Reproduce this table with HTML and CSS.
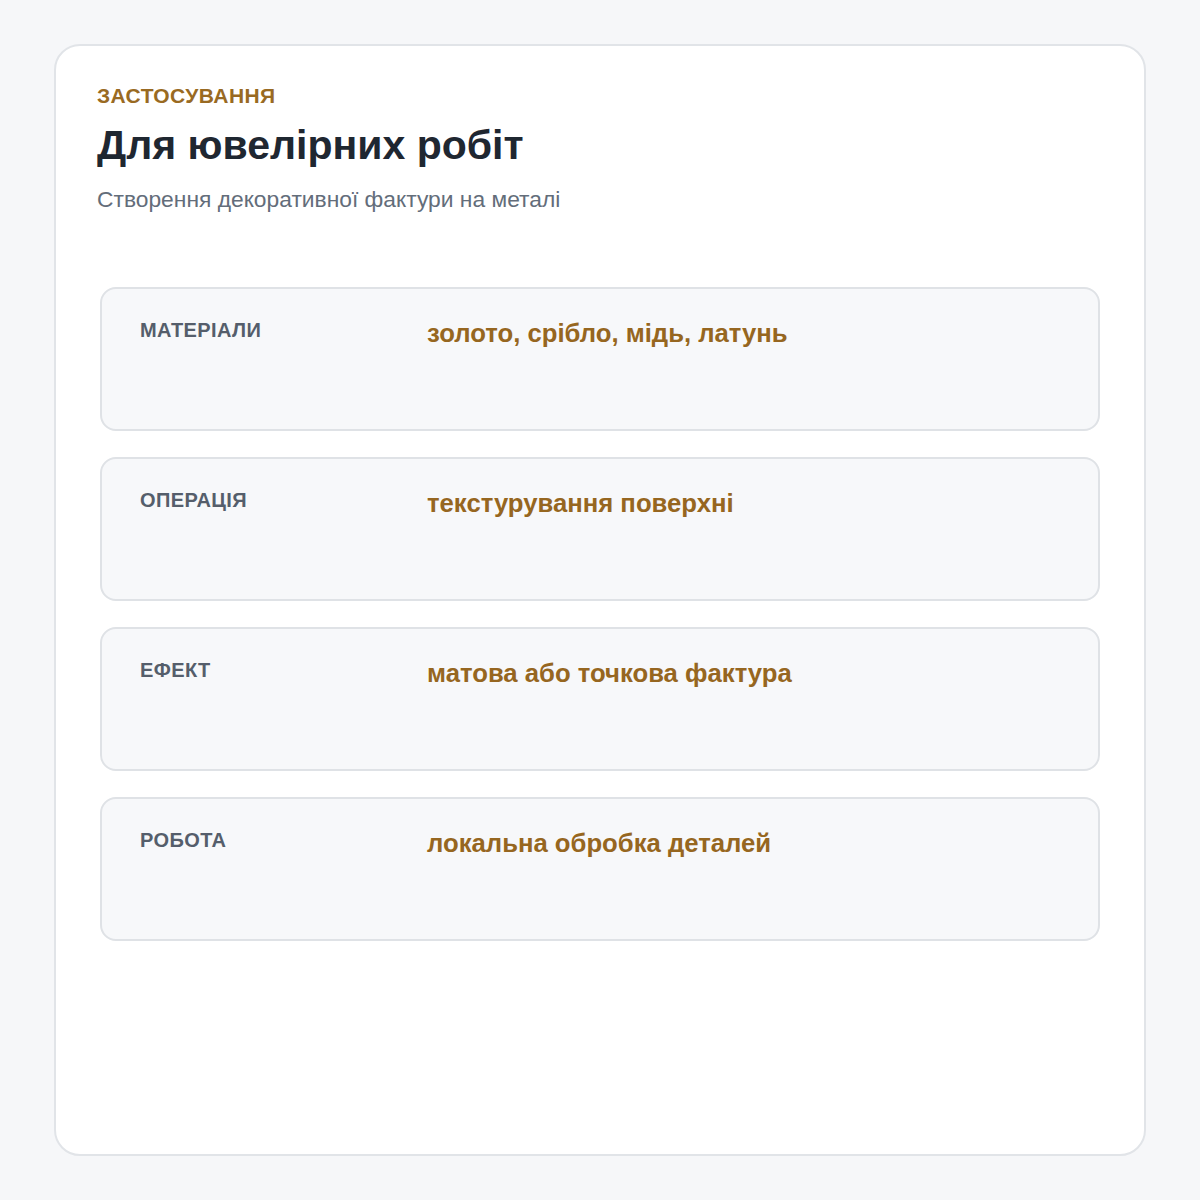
FILE: index.html
```html
<!DOCTYPE html>
<html lang="uk">
<head>
<meta charset="utf-8">
<link rel="stylesheet" href="styles.css">
</head>
<body>
<main class="card">
  <header class="head">
    <div class="eyebrow">ЗАСТОСУВАННЯ</div>
    <h1 class="title">Для ювелірних робіт</h1>
    <p class="subtitle">Створення декоративної фактури на металі</p>
  </header>
  <section class="rows">
    <div class="row"><div class="label">МАТЕРІАЛИ</div><div class="value">золото, срібло, мідь, латунь</div></div>
    <div class="row"><div class="label">ОПЕРАЦІЯ</div><div class="value">текстурування поверхні</div></div>
    <div class="row"><div class="label">ЕФЕКТ</div><div class="value">матова або точкова фактура</div></div>
    <div class="row"><div class="label">РОБОТА</div><div class="value">локальна обробка деталей</div></div>
  </section>
</main>
</body>
</html>
```
FILE: styles.css
```css
html, body { margin: 0; padding: 0; }
body {
  background: #f6f7f9;
  font-family: "Liberation Sans", Arial, sans-serif;
  width: 1200px;
  height: 1200px;
  padding: 44px 54px;
  box-sizing: border-box;
}
.card {
  background: #ffffff;
  border: 2px solid #e1e4e8;
  border-radius: 26px;
  height: 1112px;
  box-sizing: border-box;
  padding: 38px 41px;
}
.eyebrow {
  color: #996a22;
  font-size: 21px;
  font-weight: 700;
  line-height: 24px;
  letter-spacing: 0.4px;
}
.title {
  margin: 13px 0 0;
  font-size: 41px;
  line-height: 48px;
  font-weight: 700;
  color: #1f2731;
}
.subtitle {
  margin: 16px 0 0;
  font-size: 22.8px;
  line-height: 28px;
  color: #636d7a;
}
.rows {
  margin-top: 74px;
  padding: 0 3px;
  display: flex;
  flex-direction: column;
  gap: 26px;
}
.row {
  display: grid;
  grid-template-columns: 287px 1fr;
  height: 144px;
  box-sizing: border-box;
  padding: 29px 38px;
  background: #f7f8fa;
  border: 2px solid #dfe2e6;
  border-radius: 16px;
  align-items: start;
}
.label {
  font-size: 20px;
  font-weight: 700;
  color: #555e6b;
  line-height: 24px;
  letter-spacing: 0.4px;
}
.value {
  font-size: 25.7px;
  font-weight: 700;
  color: #966620;
  line-height: 30px;
}
```
